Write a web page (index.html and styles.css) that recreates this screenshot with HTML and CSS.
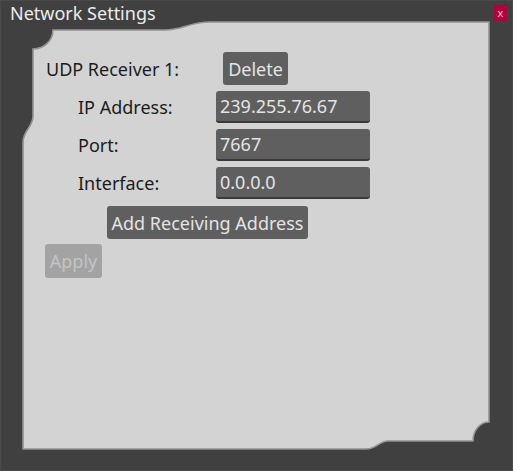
FILE: index.html
```html
<!DOCTYPE html>
<html>
<head>
<meta charset="utf-8">
<link rel="stylesheet" href="styles.css">
</head>
<body>
<div class="window">
  <svg class="frame" viewBox="0 0 513 471" width="513" height="471">
    <rect x="0.5" y="0.5" width="512" height="470" fill="#404040" stroke="#4a4a4a" stroke-width="1"/>
    <path d="M 53 30 L 165 30 C 182 30, 190 22, 210 22 L 489 22 L 489 422 A 16 19 0 0 0 473 441 L 388 441 C 379 441, 377 449, 366 449 L 23 449 L 23 142 C 23 131, 33 127, 33 116 L 33 49 A 20 19 0 0 0 53 30 Z" fill="#d3d3d3" stroke="#939393" stroke-width="1.6"/>
  </svg>
  <div class="content">
    <div class="titlebar">
      <span class="title">Network Settings</span>
      <span class="close">x</span>
    </div>
    <div class="body">
      <div class="row">
        <span class="label main">UDP Receiver 1:</span>
        <span class="btn delete">Delete</span>
      </div>
      <div class="row">
        <span class="label sub">IP Address:</span>
        <span class="field">239.255.76.67</span>
      </div>
      <div class="row">
        <span class="label sub">Port:</span>
        <span class="field">7667</span>
      </div>
      <div class="row">
        <span class="label sub">Interface:</span>
        <span class="field">0.0.0.0</span>
      </div>
      <div class="row add-row">
        <span class="btn add">Add Receiving Address</span>
      </div>
      <div class="row apply-row">
        <span class="btn apply">Apply</span>
      </div>
    </div>
  </div>
</div>
</body>
</html>
```

FILE: styles.css
```css
html, body {
  margin: 0;
  padding: 0;
  background: #404040;
}

body {
  font-family: "Noto Sans", "Open Sans", sans-serif;
  font-size: 18px;
}

.window {
  display: grid;
  width: 513px;
  height: 471px;
  overflow: hidden;
}

.frame {
  grid-area: 1 / 1;
  display: block;
}

.content {
  grid-area: 1 / 1;
  display: flex;
  flex-direction: column;
}

.titlebar {
  height: 30px;
  display: flex;
  justify-content: space-between;
  align-items: flex-start;
}

.title {
  color: #ececec;
  font-size: 18px;
  line-height: 27px;
  padding-left: 10px;
}

.close {
  margin-top: 5px;
  margin-right: 6px;
  width: 13px;
  height: 16px;
  background: #b0003c;
  color: #f2c4d2;
  font-size: 11px;
  line-height: 15px;
  text-align: center;
}

.body {
  padding-top: 22px;
  padding-left: 45px;
  display: flex;
  flex-direction: column;
  gap: 6px;
}

.row {
  display: flex;
  align-items: center;
}

.label {
  color: #1c1c1c;
  line-height: 32px;
}

.label.main {
  padding-left: 1px;
  width: 177px;
}

.label.sub {
  padding-left: 33px;
  width: 138px;
}

.btn {
  display: flex;
  align-items: center;
  justify-content: center;
  background: #5f5f5f;
  color: #e4e4e4;
  border-radius: 3px;
  height: 33px;
}

.delete {
  width: 65px;
}

.field {
  box-sizing: border-box;
  width: 154px;
  height: 32px;
  background: #5f5f5f;
  border-bottom: 2px solid #393939;
  border-radius: 3px;
  color: #e4e4e4;
  padding-left: 4px;
  line-height: 30px;
}

.add-row {
  margin-top: 1px;
  padding-left: 62px;
}

.add {
  width: 201px;
}

.apply-row {
  margin-top: -1px;
}

.apply {
  width: 57px;
  height: 34px;
  background: #a3a3a3;
  color: #c4c4c4;
}
```
